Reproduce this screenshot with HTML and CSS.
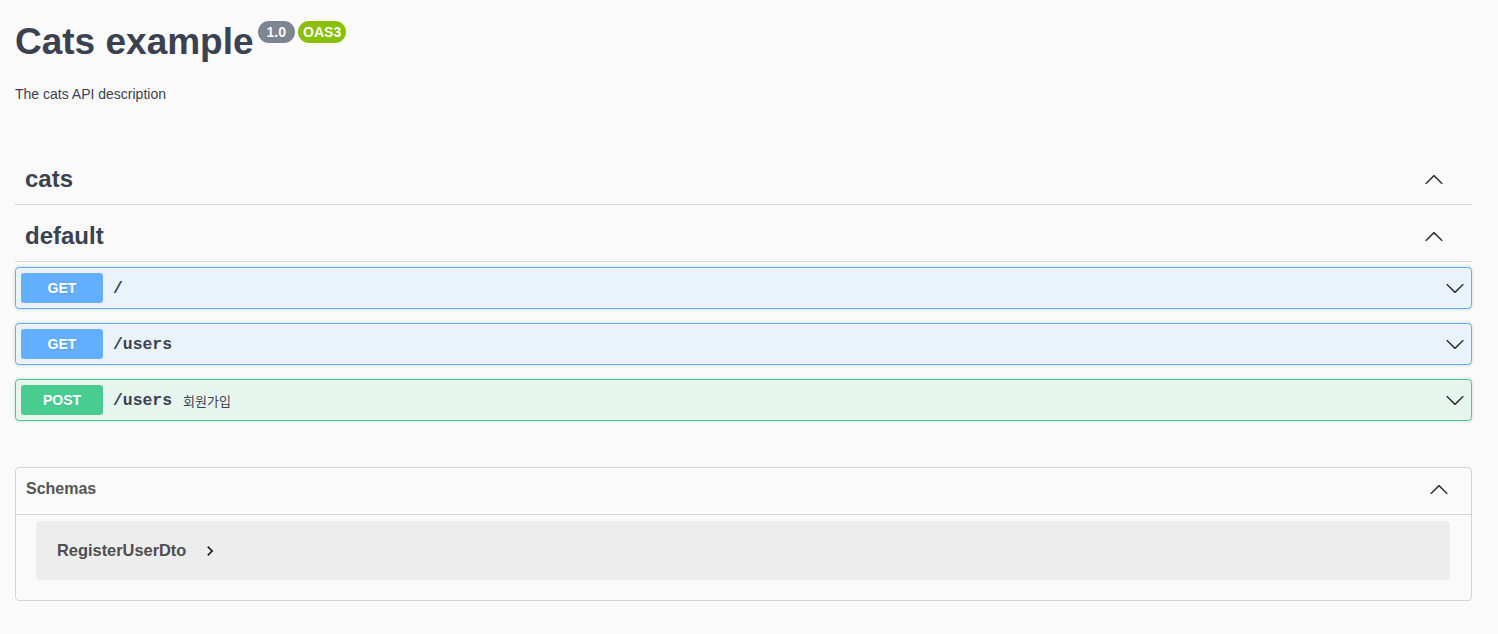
FILE: index.html
```html
<!DOCTYPE html>
<html lang="ko">
<head>
<meta charset="utf-8">
<title>Swagger UI</title>
<link rel="stylesheet" href="styles.css">
</head>
<body>
<div class="wrapper">
  <header class="info">
    <div class="title-row">
      <h1 class="title">Cats example</h1>
      <span class="badge badge-version">1.0</span>
      <span class="badge badge-oas">OAS3</span>
    </div>
    <p class="description">The cats API description</p>
  </header>

  <section class="tag-section">
    <h2 class="tag">
      <span class="tag-name">cats</span>
      <svg class="arrow" viewBox="0 0 20 20" width="20" height="20"><path d="M 17.418 14.908 C 17.69 15.176 18.127 15.176 18.397 14.908 C 18.667 14.64 18.668 14.207 18.397 13.939 L 10.489 6.109 C 10.219 5.841 9.782 5.841 9.51 6.109 L 1.602 13.939 C 1.332 14.207 1.332 14.64 1.602 14.908 C 1.873 15.176 2.311 15.176 2.581 14.908 L 10 7.767 L 17.418 14.908 Z"/></svg>
    </h2>
  </section>

  <section class="tag-section">
    <h2 class="tag">
      <span class="tag-name">default</span>
      <svg class="arrow" viewBox="0 0 20 20" width="20" height="20"><path d="M 17.418 14.908 C 17.69 15.176 18.127 15.176 18.397 14.908 C 18.667 14.64 18.668 14.207 18.397 13.939 L 10.489 6.109 C 10.219 5.841 9.782 5.841 9.51 6.109 L 1.602 13.939 C 1.332 14.207 1.332 14.64 1.602 14.908 C 1.873 15.176 2.311 15.176 2.581 14.908 L 10 7.767 L 17.418 14.908 Z"/></svg>
    </h2>

    <div class="opblock opblock-get">
      <div class="summary">
        <span class="method">GET</span>
        <span class="path">/</span>
        <svg class="arrow arrow-end" viewBox="0 0 20 20" width="20" height="20"><path d="M17.418 6.109c.272-.268.709-.268.979 0s.271.701 0 .969l-7.908 7.83c-.27.268-.707.268-.979 0l-7.908-7.83c-.27-.268-.27-.701 0-.969.271-.268.709-.268.979 0L10 13.25l7.418-7.141z"/></svg>
      </div>
    </div>

    <div class="opblock opblock-get">
      <div class="summary">
        <span class="method">GET</span>
        <span class="path">/users</span>
        <svg class="arrow arrow-end" viewBox="0 0 20 20" width="20" height="20"><path d="M17.418 6.109c.272-.268.709-.268.979 0s.271.701 0 .969l-7.908 7.83c-.27.268-.707.268-.979 0l-7.908-7.83c-.27-.268-.27-.701 0-.969.271-.268.709-.268.979 0L10 13.25l7.418-7.141z"/></svg>
      </div>
    </div>

    <div class="opblock opblock-post">
      <div class="summary">
        <span class="method">POST</span>
        <span class="path">/users</span>
        <span class="summary-desc">회원가입</span>
        <svg class="arrow arrow-end" viewBox="0 0 20 20" width="20" height="20"><path d="M17.418 6.109c.272-.268.709-.268.979 0s.271.701 0 .969l-7.908 7.83c-.27.268-.707.268-.979 0l-7.908-7.83c-.27-.268-.27-.701 0-.969.271-.268.709-.268.979 0L10 13.25l7.418-7.141z"/></svg>
      </div>
    </div>
  </section>

  <section class="models">
    <h4 class="models-header">
      <span>Schemas</span>
      <svg class="arrow" viewBox="0 0 20 20" width="20" height="20"><path d="M 17.418 14.908 C 17.69 15.176 18.127 15.176 18.397 14.908 C 18.667 14.64 18.668 14.207 18.397 13.939 L 10.489 6.109 C 10.219 5.841 9.782 5.841 9.51 6.109 L 1.602 13.939 C 1.332 14.207 1.332 14.64 1.602 14.908 C 1.873 15.176 2.311 15.176 2.581 14.908 L 10 7.767 L 17.418 14.908 Z"/></svg>
    </h4>
    <div class="model-container">
      <span class="model-title">RegisterUserDto</span>
      <svg class="model-toggle" viewBox="0 0 24 24" width="20" height="20"><path d="M10 6L8.59 7.41 13.17 12l-4.58 4.59L10 18l6-6z"/></svg>
    </div>
  </section>
</div>
</body>
</html>
```

FILE: styles.css
```css
html, body {
  margin: 0;
  background: #fafafa;
}

body {
  font-family: "Liberation Sans", Arial, "Noto Sans CJK KR", sans-serif;
  color: #3b4151;
}

.wrapper {
  padding: 20px 26px 0 15px;
}

.info {
  margin-bottom: 49px;
}

.title-row {
  display: flex;
  align-items: flex-start;
}

.title {
  margin: 0;
  font-size: 37px;
  line-height: 44px;
  font-weight: 700;
  color: #3b4151;
}

.badge {
  margin-top: 1px;
  height: 22px;
  line-height: 22px;
  border-radius: 11px;
  font-size: 14px;
  font-weight: 700;
  color: #fafafa;
}

.badge-version {
  margin-left: 4px;
  padding: 0 9px;
  background: #7d8492;
}

.badge-oas {
  margin-left: 3px;
  padding: 0 5px;
  background: #89bf04;
}

.description {
  margin: 20px 0 0;
  font-size: 14px;
  line-height: 20px;
}

.tag {
  display: flex;
  align-items: center;
  justify-content: space-between;
  margin: 0 0 5px;
  padding: 10px 28px 10px 10px;
  font-size: 24px;
  line-height: 31px;
  font-weight: 700;
  color: #3b4151;
  border-bottom: 1px solid rgba(59, 65, 81, 0.2);
}

.arrow {
  display: block;
  fill: #303030;
  flex: none;
}

.opblock {
  margin: 0 0 14px;
  border: 1px solid;
  border-radius: 4px;
  box-shadow: 0 0 3px rgba(0, 0, 0, 0.19);
}

.opblock-get {
  background: rgba(97, 175, 254, 0.1);
  border-color: #61affe;
}

.opblock-post {
  background: rgba(73, 204, 144, 0.1);
  border-color: #49cc90;
}

.summary {
  display: flex;
  align-items: center;
  padding: 5px 6px 5px 5px;
}

.method {
  width: 82px;
  height: 30px;
  line-height: 30px;
  text-align: center;
  border-radius: 3px;
  font-size: 14px;
  font-weight: 700;
  color: #fff;
  text-shadow: 0 1px 0 rgba(0, 0, 0, 0.1);
  flex: none;
}

.opblock-get .method {
  background: #61affe;
}

.opblock-post .method {
  background: #49cc90;
}

.path {
  padding: 0 11px 0 10px;
  font-family: "Liberation Mono", "Courier New", monospace;
  font-size: 16.4px;
  font-weight: 700;
  color: #3b4151;
}

.summary-desc {
  font-family: "Liberation Sans", "Noto Sans CJK KR", sans-serif;
  font-size: 13px;
  color: #3b4151;
}

.arrow-end {
  margin-left: auto;
}

.models {
  margin-top: 46px;
  border: 1px solid #d3d4d6;
  border-radius: 4px;
}

.models-header {
  display: flex;
  align-items: center;
  justify-content: space-between;
  margin: 0;
  padding: 8px 22px 12px 10px;
  font-size: 16px;
  line-height: 26px;
  font-weight: 700;
  color: #555555;
  border-bottom: 1px solid #d3d4d6;
}

.model-container {
  display: flex;
  align-items: center;
  height: 59px;
  margin: 6px 21px 20px 20px;
  padding: 0 21px;
  background: rgba(0, 0, 0, 0.05);
  border-radius: 4px;
}

.model-title {
  font-size: 16.4px;
  font-weight: 700;
  color: #4f4f4f;
}

.model-toggle {
  display: block;
  margin-left: 14px;
  fill: #222222;
}
```
